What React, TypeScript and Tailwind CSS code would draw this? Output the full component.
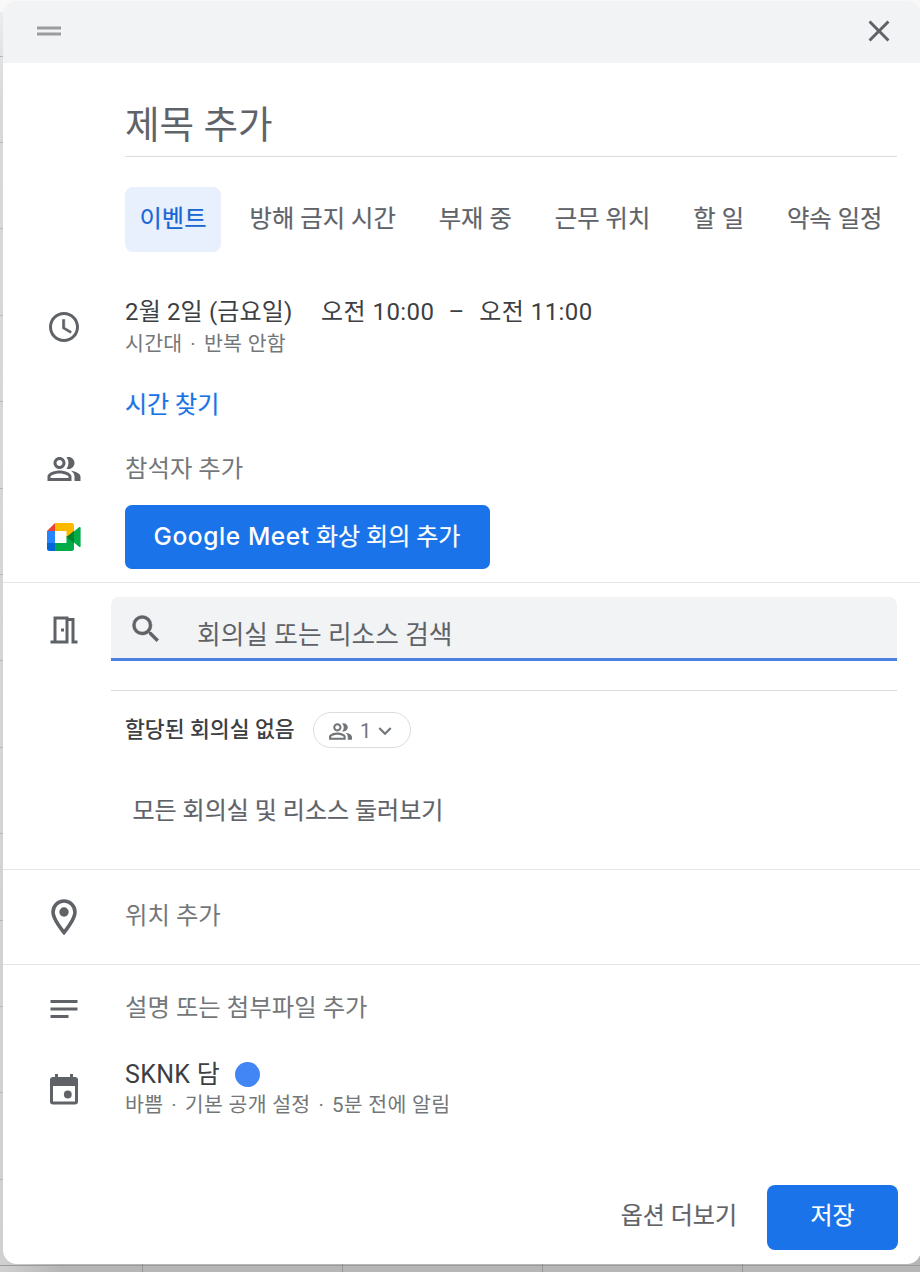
import type { ReactNode } from "react";
import {
  MdAccessTime,
  MdClose,
  MdDragHandle,
  MdExpandMore,
  MdNotes,
  MdOutlineMeetingRoom,
  MdOutlinePeopleAlt,
  MdSearch,
} from "react-icons/md";

const tabs = ["이벤트", "방해 금지 시간", "부재 중", "근무 위치", "할 일", "약속 일정"];

function MeetIcon() {
  return (
    <svg viewBox="0 0 34 28" className="h-[28px] w-[34px]">
      <path d="M0 8h8v12H0z" fill="#2684fc" />
      <path d="M8 0v8H0z" fill="#ea4335" />
      <path d="M0 20h8v8H2.500A2.500 2.500 0 0 1 0 25.500z" fill="#0066da" />
      <path d="M8 0h16.500A2.500 2.500 0 0 1 27 2.500V9l-7.500 6V8H8z" fill="#ffba00" />
      <path d="M8 20h11.500v-7L27 19v6.500a2.500 2.500 0 0 1-2.500 2.500H8z" fill="#00ac47" />
      <path d="M27 8.500 32 4.200c.8-.6 1.600-.2 1.600.8v18c0 1-.8 1.400-1.600.8l-5-4.300z" fill="#00ac47" />
      <path d="M19.500 14 27 7.700v12.600z" fill="#00832d" />
    </svg>
  );
}

function PinIcon() {
  return (
    <svg viewBox="0 0 26 37" className="h-[37px] w-[26px]">
      <path
        d="M13 2C6.900 2 2 6.900 2 13c0 7.600 11 20.500 11 20.500S24 20.600 24 13C24 6.900 19.100 2 13 2z"
        fill="none"
        stroke="#5f6368"
        strokeWidth="3.600"
      />
      <circle cx="13" cy="13" r="4.700" fill="#5f6368" />
    </svg>
  );
}

function CalendarIcon() {
  return (
    <svg viewBox="0 0 28 31" className="h-[31px] w-[28px]" fill="#5f6368">
      <path d="M5 0h3v3h12V0h3v3h2a3 3 0 0 1 3 3v21.500a3 3 0 0 1-3 3H3a3 3 0 0 1-3-3V6a3 3 0 0 1 3-3h2zM3 12v15.500h22V12z" />
      <circle cx="17.800" cy="20.500" r="3.900" />
    </svg>
  );
}

function Row({ icon, className, children }: { icon?: ReactNode; className: string; children: ReactNode }) {
  return (
    <div className={`flex items-center ${className}`}>
      <div className="flex w-[122px] shrink-0 justify-center pr-px text-[#5f6368]">{icon}</div>
      {children}
    </div>
  );
}

function Details({ parts }: { parts: string[] }) {
  return (
    <div className="flex h-[28px] text-[20.500px] leading-[29px] tracking-[0.300px] text-[#747779]">
      {parts.map((part, i) => (
        <span key={part} className="whitespace-pre">
          {i > 0 && <span className="px-[2.500px]"> · </span>}
          {part}
        </span>
      ))}
    </div>
  );
}

export default function App() {
  return (
    <div className="relative h-[1272px] w-[920px] overflow-hidden bg-[#b6b6b6] font-[Roboto,'Noto_Sans_CJK_KR',sans-serif] text-[#3c4043]">
      <svg className="absolute inset-0 h-[1272px] w-[920px]">
        <defs>
          <linearGradient id="edge" x1="0" y1="0" x2="0" y2="1">
            <stop offset="0" stopColor="#eeeeee" />
            <stop offset="0.080" stopColor="#d9d9d9" />
            <stop offset="1" stopColor="#d0d0d0" />
          </linearGradient>
          <linearGradient id="base" x1="0" y1="0" x2="1" y2="0">
            <stop offset="0" stopColor="#d0d0d0" />
            <stop offset="1" stopColor="#b6b6b6" />
          </linearGradient>
        </defs>
        <rect width="20" height="1272" fill="url(#edge)" />
        <rect width="920" height="12" fill="#f8f8f8" />
        <rect y="1262" width="60" height="10" fill="url(#base)" />
        {Array.from({ length: 14 }, (_, i) => (
          <rect key={i} y={Math.floor(56 + i * 86.4)} width="3" height="1" fill="#b5b7b9" />
        ))}
        <rect y="1265" width="920" height="1" fill="#9a9a9a" />
        {[142, 342, 542, 742].map((x) => (
          <rect key={x} x={x} y="1264" width="1" height="8" fill="#969696" />
        ))}
      </svg>

      <div className="relative mt-px ml-[3px] flex h-[1263px] w-[918px] flex-col overflow-hidden rounded-[14px] bg-white">
        <header className="flex h-[62px] shrink-0 items-center justify-between bg-[#f1f3f4] pr-[24px] pb-[2px] pl-[28px]">
          <MdDragHandle className="size-[36px] text-[#9a9d9f]" />
          <MdClose className="size-[36px] text-[#5f6368]" />
        </header>

        <div className="ml-[122px] flex h-[94px] w-[772px] shrink-0 items-center border-b border-[#dadce0] pt-[30px] text-[37.600px] leading-[60px] text-[#5f6368]">
          제목 추가
        </div>

        <nav className="mt-[30px] ml-[122px] flex h-[65px] shrink-0 gap-[14px] text-[24.300px] text-[#5f6368] [-webkit-text-stroke:0.2px]">
          {tabs.map((tab, i) => (
            <div
              key={tab}
              className={
                i === 0
                  ? "flex items-center rounded-[8px] bg-[#e8f0fe] px-[14.500px] pb-px whitespace-nowrap text-[#1967d2]"
                  : "flex items-center px-[14.500px] pb-px whitespace-nowrap"
              }
            >
              {tab}
            </div>
          ))}
        </nav>

        <Row
          icon={<MdAccessTime className="size-[36px] [&>path:last-child]:stroke-current [&>path:last-child]:[stroke-width:0.4px]" />}
          className="mt-[39px] h-[72px]"
        >
          <div className="pb-[3px]">
            <div className="flex h-[36px] items-center text-[24px]">
              <span className="tracking-[0.150px]">2월 2일 (금요일)</span>
              <span className="ml-[28.500px] tracking-[0.450px]">오전 10:00</span>
              <span className="mr-[15px] ml-[14px]">–</span>
              <span className="tracking-[0.450px]">오전 11:00</span>
            </div>
            <Details parts={["시간대", "반복 안함"]} />
          </div>
        </Row>
        <Row className="mt-[22px] h-[40px]">
          <span className="text-[24px] text-[#1a73e8] [-webkit-text-stroke:0.2px]">시간 찾기</span>
        </Row>
        <Row icon={<MdOutlinePeopleAlt className="size-[36px]" />} className="mt-[23px] h-[42px]">
          <span className="text-[24.400px] text-[#747779]">참석자 추가</span>
        </Row>
        <Row icon={<MeetIcon />} className="mt-[15px] h-[64px]">
          <button className="flex h-[64px] w-[365px] items-center rounded-[7px] bg-[#1a73e8] pb-px pl-[28.500px] text-[24px] whitespace-nowrap text-white">
            <span className="w-[162.500px] text-left font-[Inter] text-[24.500px] font-medium tracking-[0.600px]">Google Meet</span>
            <span className="[-webkit-text-stroke:0.2px]">화상 회의 추가</span>
          </button>
        </Row>

        <div className="mt-[13px] h-px shrink-0 bg-[#e3e5e8]" />

        <div className="mt-[14px] flex shrink-0">
          <div className="flex w-[108px] justify-center pt-[15px] pl-[13px] text-[#5f6368]">
            <MdOutlineMeetingRoom className="size-[36px]" />
          </div>
          <div className="flex h-[64px] w-[786px] items-center rounded-t-[8px] border-b-[3px] border-[#4a80e0] bg-[#f1f3f4] pl-[17px] text-[#5f6368]">
            <MdSearch className="mt-[2px] size-[36px] [&>path:last-child]:stroke-current [&>path:last-child]:[stroke-width:0.3px]" />
            <span className="ml-[33px] pt-[14px] text-[25.700px] leading-[40px]">회의실 또는 리소스 검색</span>
          </div>
        </div>
        <div className="mt-[29px] ml-[108px] h-px w-[786px] shrink-0 bg-[#dadce0]" />

        <div className="mt-[21px] ml-[122px] flex h-[36px] shrink-0 items-center">
          <span className="w-[188px] text-[21.600px] font-medium whitespace-nowrap">할당된 회의실 없음</span>
          <div className="flex h-[36px] w-[98px] items-center rounded-full border border-[#dadce0] pt-[2px] pl-[14px] text-[#70757a]">
            <MdOutlinePeopleAlt className="size-[25px]" />
            <span className="mr-[0.500px] ml-[7px] text-[20px]">1</span>
            <MdExpandMore className="size-[26px]" />
          </div>
        </div>
        <div className="mt-[43px] ml-[129.500px] h-[40px] shrink-0 text-[24px] leading-[40px] text-[#5f6368] [-webkit-text-stroke:0.2px]">
          모든 회의실 및 리소스 둘러보기
        </div>

        <div className="mt-[38px] h-px shrink-0 bg-[#e3e5e8]" />
        <Row icon={<PinIcon />} className="h-[94px] shrink-0">
          <span className="pb-[2px] text-[24.400px] text-[#747779]">위치 추가</span>
        </Row>
        <div className="h-px shrink-0 bg-[#e3e5e8]" />

        <Row icon={<MdNotes className="size-[36px]" />} className="mt-[23px] h-[42px]">
          <span className="pb-px text-[24.400px] text-[#747779]">설명 또는 첨부파일 추가</span>
        </Row>
        <Row icon={<CalendarIcon />} className="mt-[23px] h-[72px]">
          <div className="pb-px">
            <div className="flex h-[33px] items-center text-[25px]">
              <span className="tracking-[0.300px]">SKNK 담</span>
              <span className="ml-[15px] size-[25px] rounded-full bg-[#4285f4]" />
            </div>
            <Details parts={["바쁨", "기본 공개 설정", "5분 전에 알림"]} />
          </div>
        </Row>

        <footer className="mt-[60px] flex h-[65px] shrink-0 items-center justify-end pr-[23px] text-[24px] [-webkit-text-stroke:0.2px]">
          <button className="mr-[30px] pb-[3px] text-[#5f6368]">옵션 더보기</button>
          <button className="h-[65px] w-[131px] rounded-[8px] bg-[#1a73e8] pb-[3px] text-white">저장</button>
        </footer>
      </div>
    </div>
  );
}
